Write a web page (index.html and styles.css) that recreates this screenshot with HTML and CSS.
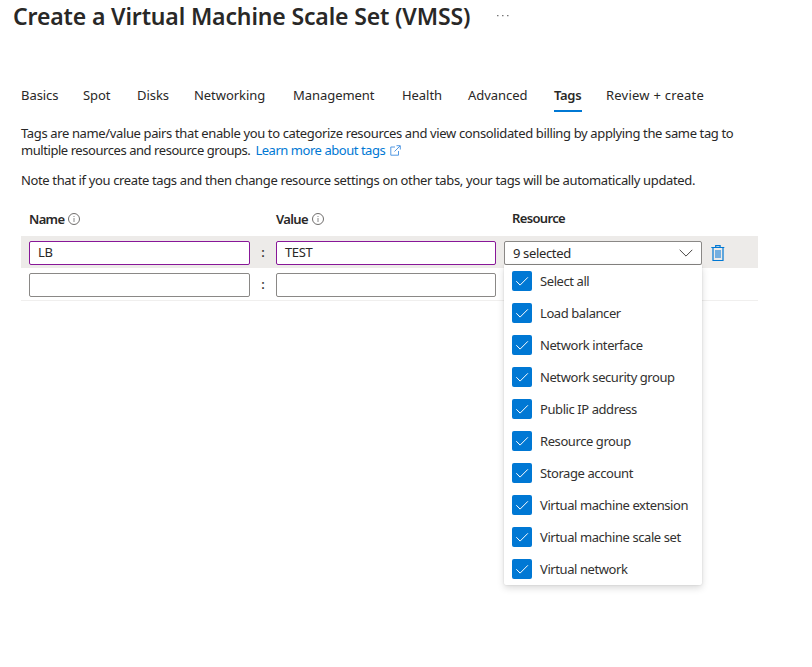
FILE: index.html
```html
<!DOCTYPE html>
<html lang="en">
<head>
<meta charset="utf-8">
<title>Create a Virtual Machine Scale Set (VMSS)</title>
<link rel="stylesheet" href="styles.css">
</head>
<body>
<svg class="defs" aria-hidden="true">
  <symbol id="info" viewBox="0 0 12 12"><circle cx="6" cy="6" r="5.5" fill="none" stroke="#605e5c" stroke-width=".9"/><path d="M6 5v4M6 3v1" stroke="#888" stroke-width="1"/></symbol>
  <symbol id="check" viewBox="0 0 20 20"><path d="M4.3 10.2l3.8 3.9 7.8-7.8" fill="none" stroke="#fff" stroke-width="1"/></symbol>
</svg>
<header class="header"><h1>Create a Virtual Machine Scale Set (VMSS)</h1><svg class="more" viewBox="0 0 12 2"><path d="M0 .5h1.5M5 .5h1.5M10 .5h1.5" stroke="#777" stroke-width="1.3"/></svg></header>
<nav class="tabs">
  <a>Basics</a><a>Spot</a><a>Disks</a><a>Networking</a><a>Management</a><a>Health</a><a>Advanced</a><a class="active">Tags</a><a class="review">Review + create</a>
</nav>
<main>
  <p class="intro"><span class="line1">Tags are name/value pairs that enable you to categorize resources and view consolidated billing by applying the same tag to</span><br><span class="line2">multiple resources and resource groups.</span><a class="link"><span>Learn more about tags</span><svg viewBox="0 0 11 11"><path d="M5 2H.8v8.2h7.7V6M6.5.7h3.8v3.8M10 1L4.5 6.5" fill="none" stroke="#3f8de0" stroke-width=".9"/></svg></a></p>
  <p class="note">Note that if you create tags and then change resource settings on other tabs, your tags will be automatically updated.</p>
  <section class="table">
    <div class="row head"><div class="label"><span>Name</span><svg><use href="#info"/></svg></div><i></i><div class="label"><span>Value</span><svg><use href="#info"/></svg></div><i></i><div class="label resource">Resource</div></div>
    <div class="row selected">
      <div class="field edited">LB</div><b class="colon">:</b><div class="field edited">TEST</div><i></i>
      <div class="combo"><div class="field select"><span>9 selected</span><svg viewBox="0 0 14 8"><path d="M.7.8L7 7.1 13.3.8" fill="none" stroke="#484644" stroke-width="1"/></svg></div>
        <ul class="menu">
          <li><svg><use href="#check"/></svg><span>Select all</span></li>
          <li><svg><use href="#check"/></svg><span>Load balancer</span></li>
          <li><svg><use href="#check"/></svg><span>Network interface</span></li>
          <li><svg><use href="#check"/></svg><span>Network security group</span></li>
          <li><svg><use href="#check"/></svg><span>Public IP address</span></li>
          <li><svg><use href="#check"/></svg><span>Resource group</span></li>
          <li><svg><use href="#check"/></svg><span>Storage account</span></li>
          <li><svg><use href="#check"/></svg><span>Virtual machine extension</span></li>
          <li><svg><use href="#check"/></svg><span>Virtual machine scale set</span></li>
          <li><svg><use href="#check"/></svg><span>Virtual network</span></li>
        </ul>
      </div>
      <svg class="trash" viewBox="0 0 14 17"><path d="M4 5h6v8H4z" fill="#74afe0"/><path d="M.3 2.5h13M4.7 2.3V.7h4.4v1.6M2 2.8v12.7h10V2.8" fill="none" stroke="#0078d4" stroke-width="1.2"/></svg>
    </div>
    <div class="row last"><div class="field"></div><b class="colon">:</b><div class="field"></div></div>
  </section>
</main>
</body>
</html>
```
FILE: styles.css
```css
* { box-sizing: border-box; }
body { margin: 0; height: 667px; overflow: hidden; background: #fff; color: #292827; font: 13px/17px "Noto Sans", sans-serif; white-space: nowrap; }
.defs { position: absolute; width: 0; height: 0; }
svg { display: block; flex: none; }
.header { display: flex; align-items: center; height: 32px; padding-left: 13px; }
h1 { width: 484px; margin: 0; font-size: 23px; line-height: 32px; font-weight: 600; letter-spacing: -.14px; }
.more { width: 12px; height: 2px; }
.tabs { display: grid; grid-template-columns: 62px 54px 57px 99px 109px 66px 86px 52px 100px; margin: 52px 0 0 21px; height: 28px; line-height: 23px; letter-spacing: -.05px; }
.tabs a { justify-self: start; height: 28px; }
.tabs .active { font-weight: 600; width: 28px; border-bottom: 2px solid #0078d4; letter-spacing: -.3px; }
.tabs .review { letter-spacing: .23px; }
main { padding-left: 21px; }
p { margin: 0; }
.intro { padding-top: 13px; }
.line1, .note { letter-spacing: -.365px; }
.line2 { letter-spacing: -.44px; }
.link { display: inline-flex; align-items: center; gap: 5px; margin-left: 5px; color: #0078d4; vertical-align: top; letter-spacing: -.46px; }
.link svg { width: 11px; height: 11px; }
.note { margin-top: 13px; }
.table { width: 737px; margin-top: 14px; }
.row { display: grid; grid-template-columns: 221px 26px 220px 8px 198px 30px; height: 32px; padding: 5px 0 0 8px; align-items: start; }
.head { height: 33px; padding-top: 8px; }
.label { display: flex; align-items: center; gap: 4px; font-weight: 600; letter-spacing: -.65px; }
.label svg { width: 12px; height: 12px; margin-bottom: 2px; }
.resource { padding-left: 8px; margin-top: -1px; }
.selected { background: #edebe9; }
.colon { font-weight: 500; text-align: center; line-height: 22px; }
.field { height: 24px; border: 1px solid #8a8886; border-radius: 2px; background: #fff; padding: 0 8px; line-height: 21px; letter-spacing: -.4px; }
.edited { border-color: #881798; }
.combo { position: relative; }
.select { display: flex; align-items: center; justify-content: space-between; line-height: 22px; letter-spacing: -.35px; }
.select svg { width: 14px; height: 8px; }
.trash { width: 14px; height: 17px; margin: 4px 0 0 9px; }
.last { border-bottom: 1px solid #f0efee; height: 33px; }
.menu { position: absolute; z-index: 1; top: 24px; left: 0; width: 198px; height: 320px; margin: 0; padding: 0 0 0 8px; list-style: none; background: #fff; border-radius: 0 0 2px 2px; box-shadow: 0 3px 7px rgba(0,0,0,.15), 0 0 2px rgba(0,0,0,.12); }
.menu li { display: flex; align-items: center; gap: 8px; height: 32px; letter-spacing: -.42px; color: #323130; }
.menu svg { width: 20px; height: 20px; background: #0078d4; border-radius: 2px; }
```
